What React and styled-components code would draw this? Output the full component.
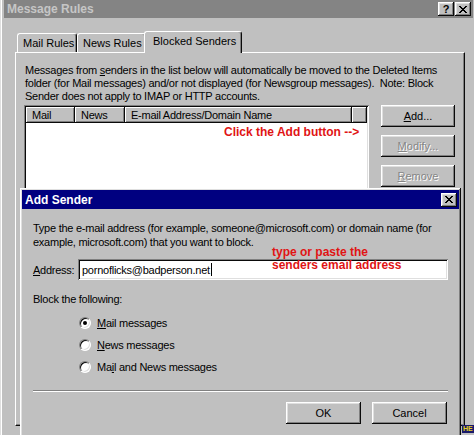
import React from "react";
import styled, { createGlobalStyle, css } from "styled-components";

const Global = createGlobalStyle`
  html, body { margin: 0; padding: 0; background: #c0c0c0; }
  body { font-family: "Liberation Sans", Arial, sans-serif; font-size: 11px; color: #000; letter-spacing: -0.25px; }
  #root { width: 474px; height: 435px; }
  * { box-sizing: border-box; }
`;

const raised = css`
  box-shadow: inset -1px -1px #0a0a0a, inset 1px 1px #ffffff,
    inset -2px -2px #808080, inset 2px 2px #dfdfdf;
`;

const sunken = css`
  box-shadow: inset 1px 1px #808080, inset -1px -1px #ffffff,
    inset 2px 2px #0a0a0a, inset -2px -2px #dfdfdf;
`;

const Desktop = styled.div`
  position: relative;
  width: 474px;
  height: 435px;
  overflow: hidden;
  background: #c0c0c0;
`;

const Window = styled.div`
  display: flex;
  flex-direction: column;
  height: 100%;
  padding: 0 1px 0 4px;
  background: #c0c0c0;
  box-shadow: inset 1px 0 #dfdfdf, inset 2px 0 #ffffff;
`;

const TitleBar = styled.div`
  flex: none;
  height: ${(p) => p.$h}px;
  display: flex;
  align-items: center;
  justify-content: space-between;
  padding: 0 2px 0 3px;
  background: ${(p) => (p.$active ? "#000080" : "#848484")};
  color: ${(p) => (p.$active ? "#ffffff" : "#c6c6c6")};
  font-weight: bold;
  font-size: ${(p) => p.$size}px;
  letter-spacing: 0;
  white-space: nowrap;
`;

const CaptionButtons = styled.div`
  display: flex;
  gap: 1px;
`;

const CaptionButton = styled.div`
  width: 16px;
  height: 14px;
  background: #c0c0c0;
  ${raised};
  display: flex;
  align-items: center;
  justify-content: center;
  color: #000;
  font-size: 11px;
  font-weight: bold;
  line-height: 1;
`;

const WindowBody = styled.div`
  flex: 1;
  display: flex;
  flex-direction: column;
  padding: 13px 0 0 11px;
`;

const TabRow = styled.div`
  display: flex;
  align-items: flex-end;
  height: 21px;
  padding-left: 2px;
  position: relative;
  z-index: 1;
`;

const Tab = styled.div`
  width: ${(p) => p.$w}px;
  height: ${(p) => (p.$selected ? 22 : 19)}px;
  margin: ${(p) => (p.$selected ? "0 -2px -1px -2px" : "0")};
  position: relative;
  z-index: ${(p) => (p.$selected ? 2 : 1)};
  background: #c0c0c0;
  border-top: 1px solid #ffffff;
  border-left: 1px solid #ffffff;
  border-right: 1px solid #0a0a0a;
  box-shadow: inset -1px 0 #808080;
  border-radius: 3px 3px 0 0;
  padding: ${(p) => (p.$selected ? "3px 0 0 8px" : "3px 0 0 5px")};
  font-size: 11px;
  letter-spacing: 0;
  white-space: nowrap;
`;

const Panel = styled.div`
  width: 450px;
  height: 374px;
  background: #c0c0c0;
  border-top: 1px solid #ffffff;
  border-left: 1px solid #ffffff;
  border-right: 1px solid #0a0a0a;
  border-bottom: 1px solid #0a0a0a;
  box-shadow: inset -1px -1px #808080;
  padding: 11px 0 0 8px;
`;

const Para = styled.p`
  margin: 0 0 0 1px;
  line-height: 13px;
  white-space: nowrap;
`;

const ListRow = styled.div`
  display: flex;
  gap: 12px;
  margin-top: 2px;
`;

const ListView = styled.div`
  width: 345px;
  height: 200px;
  background: #ffffff;
  ${sunken};
  padding: 2px;
  display: flex;
  flex-direction: column;
`;

const HeaderRow = styled.div`
  display: flex;
  height: 16px;
`;

const HeaderCell = styled.div`
  flex: ${(p) => (p.$w ? `0 0 ${p.$w}px` : "1")};
  background: #c0c0c0;
  box-shadow: inset -1px -1px #0a0a0a, inset 1px 1px #ffffff, inset -2px -2px #808080;
  padding: 2px 0 0 6px;
  white-space: nowrap;
  overflow: hidden;
`;

const Annotation = styled.div`
  color: #e01414;
  font-weight: bold;
  font-size: 12px;
  line-height: 13px;
  letter-spacing: 0;
  white-space: nowrap;
`;

const ListBody = styled.div`
  padding: 3px 0 0 198px;
`;

const ButtonColumn = styled.div`
  display: flex;
  flex-direction: column;
  gap: 8px;
`;

const Button = styled.div`
  width: ${(p) => p.$w || 75}px;
  height: 22px;
  background: #c0c0c0;
  ${raised};
  display: flex;
  align-items: center;
  justify-content: center;
  font-size: 11px;
  letter-spacing: 0;
  color: ${(p) => (p.$disabled ? "#868686" : "#000")};
  text-shadow: ${(p) => (p.$disabled ? "1px 1px #ffffff" : "none")};
`;

const Dialog = styled.div`
  position: absolute;
  left: 20px;
  top: 188px;
  width: 441px;
  height: 260px;
  padding: 2px;
  background: #c0c0c0;
  ${raised};
  display: flex;
  flex-direction: column;
`;

const DialogBody = styled.div`
  padding: 12px 11px 0 11px;
  display: flex;
  flex-direction: column;
`;

const DialogText = styled.p`
  margin: 0;
  line-height: 14px;
  white-space: nowrap;
`;

const AddressRow = styled.div`
  position: relative;
  display: flex;
  align-items: center;
  margin-top: 10px;
`;

const Label = styled.label`
  width: 45px;
  flex: none;
`;

const TextField = styled.div`
  flex: 1;
  height: 21px;
  background: #ffffff;
  ${sunken};
  padding: 0 4px;
  display: flex;
  align-items: center;
  white-space: nowrap;
`;

const Caret = styled.span`
  display: inline-block;
  width: 1px;
  height: 13px;
  background: #000;
  margin-left: 1px;
`;

const FloatingNote = styled(Annotation)`
  position: absolute;
  left: 239px;
  top: -13px;
`;

const Section = styled.div`
  margin-top: 12px;
  line-height: 14px;
`;

const RadioGroup = styled.div`
  margin-top: 6px;
  padding-left: 46px;
  display: flex;
  flex-direction: column;
`;

const RadioRow = styled.div`
  height: 22px;
  display: flex;
  align-items: center;
  gap: 6px;
`;

const Radio = styled.span`
  width: 12px;
  height: 12px;
  border-radius: 50%;
  background: #ffffff;
  border: 1px solid;
  border-color: #808080 #ffffff #ffffff #808080;
  box-shadow: inset 1px 1px #0a0a0a, inset -1px -1px #dfdfdf;
  display: flex;
  align-items: center;
  justify-content: center;
  &::after {
    content: "";
    width: 4px;
    height: 4px;
    border-radius: 50%;
    background: ${(p) => (p.$checked ? "#000" : "transparent")};
  }
`;

const Separator = styled.div`
  margin-top: 12px;
  height: 2px;
  border-top: 1px solid #808080;
  border-bottom: 1px solid #ffffff;
`;

const DialogButtons = styled.div`
  margin-top: 10px;
  display: flex;
  justify-content: flex-end;
  gap: 11px;
  padding-right: 1px;
`;

const Badge = styled.div`
  position: absolute;
  right: 0;
  bottom: 2px;
  width: 12px;
  height: 8px;
  background: #1a1a6a;
  color: #e8d020;
  font-size: 7px;
  font-weight: bold;
  line-height: 8px;
  letter-spacing: 0;
  overflow: hidden;
  padding-left: 1px;
`;

const CloseGlyph = () => (
  <svg width="8" height="7" viewBox="0 0 8 7" shapeRendering="crispEdges">
    <path
      fill="#000"
      d="M0 0h2v1H0zM6 0h2v1H6zM1 1h2v1H1zM5 1h2v1H5zM2 2h4v1H2zM3 3h2v1H3zM2 4h4v1H2zM1 5h2v1H1zM5 5h2v1H5zM0 6h2v1H0zM6 6h2v1H6z"
    />
  </svg>
);

export default function App() {
  return (
    <>
      <Global />
      <Desktop>
        <Window>
          <TitleBar $h={18} $size={12}>
            <span>Message Rules</span>
            <CaptionButtons>
              <CaptionButton>?</CaptionButton>
              <CaptionButton>
                <CloseGlyph />
              </CaptionButton>
            </CaptionButtons>
          </TitleBar>
          <WindowBody>
            <TabRow>
              <Tab $w={60}>Mail Rules</Tab>
              <Tab $w={69}>News Rules</Tab>
              <Tab $w={98} $selected>
                Blocked Senders
              </Tab>
            </TabRow>
            <Panel>
              <Para>
                Messages from <u>s</u>enders in the list below will automatically be moved to the Deleted Items
                <br />
                folder (for Mail messages) and/or not displayed (for Newsgroup messages).&nbsp; Note: Block
                <br />
                Sender does not apply to IMAP or HTTP accounts.
              </Para>
              <ListRow>
                <ListView>
                  <HeaderRow>
                    <HeaderCell $w={49}>Mail</HeaderCell>
                    <HeaderCell $w={50}>News</HeaderCell>
                    <HeaderCell $w={227}>E-mail Address/Domain Name</HeaderCell>
                    <HeaderCell />
                  </HeaderRow>
                  <ListBody>
                    <Annotation>Click the Add button --&gt;</Annotation>
                  </ListBody>
                </ListView>
                <ButtonColumn>
                  <Button $w={74}>
                    <span>
                      <u>A</u>dd...
                    </span>
                  </Button>
                  <Button $w={74} $disabled>
                    <span>
                      <u>M</u>odify...
                    </span>
                  </Button>
                  <Button $w={74} $disabled>
                    <span>
                      <u>R</u>emove
                    </span>
                  </Button>
                </ButtonColumn>
              </ListRow>
            </Panel>
          </WindowBody>
        </Window>

        <Dialog>
          <TitleBar $h={19} $size={12} $active>
            <span>Add Sender</span>
            <CaptionButton>
              <CloseGlyph />
            </CaptionButton>
          </TitleBar>
          <DialogBody>
            <DialogText>
              Type the e-mail address (for example, someone@microsoft.com) or domain name (for
              <br />
              example, microsoft.com) that you want to block.
            </DialogText>
            <AddressRow>
              <Label>
                <u>A</u>ddress:
              </Label>
              <TextField>
                pornoflicks@badperson.net
                <Caret />
              </TextField>
              <FloatingNote>
                type or paste the
                <br />
                senders email address
              </FloatingNote>
            </AddressRow>
            <Section>Block the following:</Section>
            <RadioGroup>
              <RadioRow>
                <Radio $checked />
                <span>
                  <u>M</u>ail messages
                </span>
              </RadioRow>
              <RadioRow>
                <Radio />
                <span>
                  <u>N</u>ews messages
                </span>
              </RadioRow>
              <RadioRow>
                <Radio />
                <span>
                  Ma<u>i</u>l and News messages
                </span>
              </RadioRow>
            </RadioGroup>
            <Separator />
            <DialogButtons>
              <Button>OK</Button>
              <Button>Cancel</Button>
            </DialogButtons>
          </DialogBody>
        </Dialog>
        <Badge>HE</Badge>
      </Desktop>
    </>
  );
}
